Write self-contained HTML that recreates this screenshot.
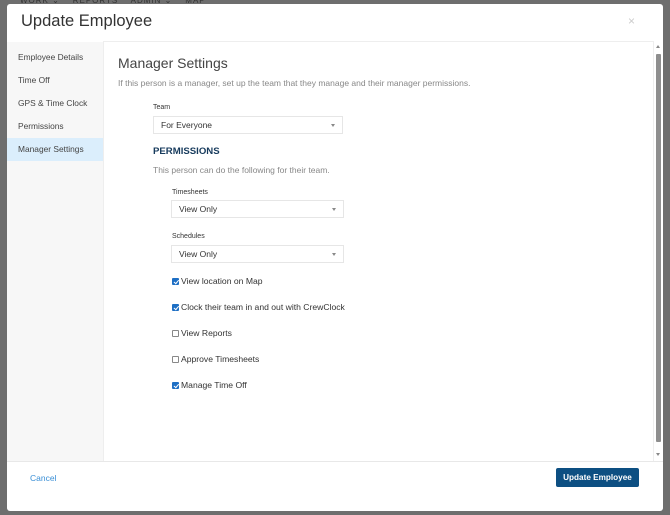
<!DOCTYPE html>
<html><head><meta charset="utf-8"><style>
*{box-sizing:border-box;margin:0;padding:0}
body{width:670px;height:515px;background:#6e6e6e;font-family:"Liberation Sans",sans-serif;position:relative;overflow:hidden;color:#333}
.top{position:absolute;top:-4px;left:20px;font-size:8px;color:#333;letter-spacing:1px}
.modal{position:absolute;left:7px;top:4px;width:656px;height:507px;background:#fff;border-radius:3px}
.title{position:absolute;left:14px;top:8px;font-size:16.5px;color:#333}
.x{position:absolute;left:621px;top:10px;color:#ccc;font-size:12px}
.side{position:absolute;left:0;top:38px;width:96px;height:419px;background:#f7f7f7}
.side div{height:23px;line-height:23px;padding-left:11px;font-size:8.4px;color:#444}
.side .act{background:#dbeefc}
.panel{position:absolute;left:96px;top:37px;width:551px;height:420px;border:1px solid #eee;border-bottom:none}
.sb{position:absolute;left:647px;top:38px;width:9px;height:419px;background:#fff}
.thumb{position:absolute;left:2px;top:12px;width:5px;height:388px;background:#8e8e8e;border-radius:1px}
.abs{position:absolute}
h2{font-weight:normal;font-size:14px;color:#444}
.sel{position:absolute;height:18px;border:1px solid #e6e6e6;background:#fff;font-size:8.5px;line-height:17px;padding-left:7px;color:#333}
.sel:after{content:"";position:absolute;right:7px;top:7px;border:2.5px solid transparent;border-top:3px solid #888}
.lbl{font-size:7px;color:#333}
.cb{position:absolute;font-size:8.6px;color:#333;display:flex;align-items:center}
.cb i{display:inline-block;width:7px;height:7px;border:1px solid #888;border-radius:1px;margin-right:2px;position:relative;background:#fff}
.cb i.on{background:#1e6fc4;border-color:#1e6fc4}
.cb i.on:after{content:"";position:absolute;left:1.5px;top:0;width:2px;height:3.5px;border:solid #fff;border-width:0 1.2px 1.2px 0;transform:rotate(40deg)}
.foot{position:absolute;left:0;top:457px;width:656px;border-top:1px solid #e8e8e8}
.btn{position:absolute;left:549px;top:464px;width:83px;height:19px;background:#0d4f82;color:#fff;border-radius:2px;font-size:8.2px;font-weight:bold;text-align:center;line-height:19px}
</style></head><body>
<div class="top">WORK ⌄ &nbsp;&nbsp; REPORTS &nbsp;&nbsp; ADMIN ⌄ &nbsp;&nbsp; MAP</div>
<div class="modal">
<div class="title">Update Employee</div>
<div class="x">×</div>
<div class="side">
<div style="margin-top:4px">Employee Details</div><div>Time Off</div><div>GPS &amp; Time Clock</div><div>Permissions</div><div class="act">Manager Settings</div>
</div>
<div class="panel"></div>
<div class="sb"><div style="position:absolute;left:2px;top:3px;border:2.5px solid transparent;border-bottom:3px solid #888;border-top:0"></div><div class="thumb"></div><div style="position:absolute;left:2px;top:411px;border:2.5px solid transparent;border-top:3px solid #888;border-bottom:0"></div></div>
<h2 class="abs" style="left:111px;top:51px">Manager Settings</h2>
<div class="abs" style="left:111px;top:74px;font-size:8.5px;color:#888">If this person is a manager, set up the team that they manage and their manager permissions.</div>
<div class="abs lbl" style="left:146px;top:100px">Team</div>
<div class="sel" style="left:146px;top:112px;width:190px">For Everyone</div>
<div class="abs" style="left:146px;top:142px;font-size:9.6px;font-weight:bold;color:#163a5c">PERMISSIONS</div>
<div class="abs" style="left:146px;top:161px;font-size:8.5px;color:#888">This person can do the following for their team.</div>
<div class="abs lbl" style="left:165px;top:185px">Timesheets</div>
<div class="sel" style="left:164px;top:196px;width:173px">View Only</div>
<div class="abs lbl" style="left:165px;top:229px">Schedules</div>
<div class="sel" style="left:164px;top:241px;width:173px">View Only</div>
<div class="cb" style="left:165px;top:272px"><i class="on"></i>View location on Map</div>
<div class="cb" style="left:165px;top:298px"><i class="on"></i>Clock their team in and out with CrewClock</div>
<div class="cb" style="left:165px;top:324px"><i></i>View Reports</div>
<div class="cb" style="left:165px;top:350px"><i></i>Approve Timesheets</div>
<div class="cb" style="left:165px;top:376px"><i class="on"></i>Manage Time Off</div>
<div class="foot"></div>
<div class="abs" style="left:23px;top:469px;font-size:8.5px;color:#3a8fd6">Cancel</div>
<div class="btn">Update Employee</div>
</div>
</body></html>
